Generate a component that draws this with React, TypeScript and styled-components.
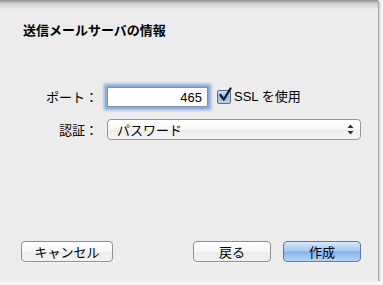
import React from 'react';
import styled, { createGlobalStyle, css } from 'styled-components';

const GlobalStyle = createGlobalStyle`
  html, body {
    margin: 0;
    padding: 0;
    background: #f4f4f4;
  }
  body {
    font-family: "Liberation Sans", "Noto Sans CJK JP", sans-serif;
    font-size: 13px;
    color: #000;
  }
`;

const App = () => {
  return (
    <>
      <GlobalStyle />
      <Sheet>
        <Title>送信メールサーバの情報</Title>
        <Form>
          <Label>ポート：</Label>
          <InlineRow>
            <PortInput defaultValue="465" />
            <CheckLabel>
              <CheckBox>
                <svg width="14" height="16" viewBox="0 0 14 16">
                  <path d="M2.5 8 L5.8 12.5 L12.5 1.5" fill="none" stroke="#16202e" strokeWidth="2.4" strokeLinecap="round" strokeLinejoin="round" />
                </svg>
              </CheckBox>
              SSL を使用
            </CheckLabel>
          </InlineRow>
          <Label>認証：</Label>
          <Select>
            <span>パスワード</span>
            <svg width="7" height="11" viewBox="0 0 7 11">
              <path d="M3.5 0.5 L6.5 4 L0.5 4 Z" fill="#333" />
              <path d="M3.5 10.5 L6.5 7 L0.5 7 Z" fill="#333" />
            </svg>
          </Select>
        </Form>
        <Footer>
          <Button $width={92}>キャンセル</Button>
          <Spacer />
          <Button $width={78}>戻る</Button>
          <Button $width={78} $primary>作成</Button>
        </Footer>
      </Sheet>
    </>
  );
};

export default App;

const Sheet = styled.div`
  width: 378px;
  height: 281px;
  box-sizing: border-box;
  display: flex;
  flex-direction: column;
  background: linear-gradient(#8c8c8c 0, #c9c9c9 3px, #e4e4e4 7px, #ececec 10px, #ececec 100%);
  box-shadow: 1px 1px 2px rgba(0, 0, 0, 0.45), -1px 0 1px rgba(0, 0, 0, 0.15);
`;

const Title = styled.div`
  padding: 22px 0 0 23px;
  font-family: "Noto Sans CJK JP", sans-serif;
  font-size: 13px;
  font-weight: bold;
  line-height: 16px;
`;

const Form = styled.div`
  margin-top: 49px;
  display: grid;
  grid-template-columns: 98px 1fr;
  grid-template-rows: 20px 21px;
  column-gap: 8px;
  row-gap: 12px;
  padding-right: 17px;
  align-items: center;
`;

const Label = styled.div`
  text-align: right;
  font-family: "Noto Sans CJK JP", sans-serif;
  font-size: 13px;
  color: #000;
  line-height: 16px;
`;

const InlineRow = styled.div`
  display: flex;
  align-items: center;
`;

const PortInput = styled.input`
  width: 101px;
  height: 20px;
  box-sizing: border-box;
  border: 1px solid #7e8fa8;
  padding: 0 5px;
  margin: 0 0 0 1px;
  text-align: right;
  font-family: "Liberation Sans", "Noto Sans CJK JP", sans-serif;
  font-size: 13px;
  color: #000;
  background: #fff;
  box-shadow: 0 0 0 2px #8aaedd, 0 0 2px 4px rgba(120, 160, 215, 0.5);
  border-radius: 1px;
  outline: none;
`;

const CheckLabel = styled.label`
  display: flex;
  align-items: center;
  margin-left: 9px;
  gap: 3px;
  font-family: "Liberation Sans", "Noto Sans CJK JP", sans-serif;
  font-size: 13px;
  line-height: 16px;
`;

const CheckBox = styled.span`
  position: relative;
  width: 14px;
  height: 14px;
  box-sizing: border-box;
  border: 1px solid #5b6f8c;
  border-radius: 2px;
  background: linear-gradient(#cfe0f5, #9bbbe3 50%, #b9d2ef);
  svg {
    position: absolute;
    left: 0;
    top: -4px;
  }
`;

const Select = styled.div`
  margin-left: 1px;
  height: 21px;
  box-sizing: border-box;
  border: 1px solid #959595;
  border-radius: 4px;
  background: linear-gradient(#ffffff, #f7f7f7 50%, #ececec 51%, #f6f6f6);
  display: flex;
  align-items: center;
  justify-content: space-between;
  padding: 0 6px 0 9px;
  font-family: "Noto Sans CJK JP", sans-serif;
  font-size: 13px;
  line-height: 16px;
`;

const Footer = styled.div`
  margin-top: auto;
  padding: 0 17px 19px 21px;
  display: flex;
  align-items: center;
  gap: 12px;
`;

const Spacer = styled.div`
  flex: 1;
`;

const primaryStyles = css`
  border-color: #5a79ab;
  background: linear-gradient(#d7e8fc, #a8c9f2 45%, #87b3ec 55%, #b7d6f8);
`;

const Button = styled.button<{ $width: number; $primary?: boolean }>`
  width: ${p => p.$width}px;
  height: 21px;
  box-sizing: border-box;
  border: 1px solid #909090;
  border-radius: 4px;
  background: linear-gradient(#ffffff, #f6f6f6 50%, #ebebeb 51%, #f3f3f3);
  font-family: "Noto Sans CJK JP", sans-serif;
  font-size: 13px;
  line-height: 16px;
  color: #000;
  padding: 0;
  box-shadow: 0 1px 0 rgba(255, 255, 255, 0.6);
  ${p => p.$primary && primaryStyles}
`;
